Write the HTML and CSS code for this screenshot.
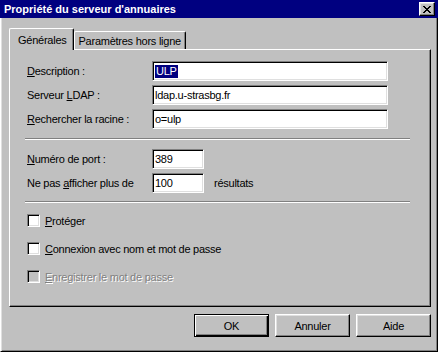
FILE: index.html
```html
<!DOCTYPE html>
<html lang="fr">
  <head>
    <meta charset="UTF-8" />
    <title>Propriété du serveur d'annuaires</title>
    <link rel="stylesheet" href="styles.css">
  </head>
  <body>
    <div class="window">
      <div class="titlebar">
        <span>Propriété du serveur d'annuaires</span>
        <div class="close">
          <svg width="8" height="7" viewBox="0 0 8 7">
            <path d="M0 0h2v1h-2zM6 0h2v1h-2zM1 1h2v1h-2zM5 1h2v1h-2zM2 2h4v1h-4zM3 3h2v1h-2zM2 4h4v1h-4zM1 5h2v1h-2zM5 5h2v1h-2zM0 6h2v1h-2zM6 6h2v1h-2z" fill="#000"/>
          </svg>
        </div>
      </div>

      <div class="client">
        <div class="tabs">
          <div class="tab active">Générales</div>
          <div class="tab">Paramètres hors ligne</div>
        </div>

        <div class="panel">
          <!-- serveur -->
          <div class="form">
            <label><u>D</u>escription :</label>
            <div class="field"><span class="selected">ULP</span></div>
            <label>Serveur <u>L</u>DAP :</label>
            <div class="field">ldap.u-strasbg.fr</div>
            <label><u>R</u>echercher la racine :</label>
            <div class="field">o=ulp</div>
          </div>

          <div class="sep"></div>

          <!-- port / résultats -->
          <div class="form small">
            <label><u>N</u>uméro de port :</label>
            <div class="field">389</div>
            <span></span>
            <label>Ne pas <u>a</u>fficher plus de</label>
            <div class="field">100</div>
            <span class="unit">résultats</span>
          </div>

          <div class="sep"></div>

          <div class="checks">
            <div class="check"><span class="box"></span><span><u>P</u>rotéger</span></div>
            <div class="check"><span class="box"></span><span><u>C</u>onnexion avec nom et mot de passe</span></div>
            <div class="check disabled"><span class="box"></span><span><u>E</u>nregistrer le mot de passe</span></div>
          </div>
        </div>

        <div class="buttons">
          <div class="btn default">OK</div>
          <div class="btn">Annuler</div>
          <div class="btn">Aide</div>
        </div>
      </div>
    </div>
  </body>
</html>
```

FILE: styles.css
```css
* {
  margin: 0;
  padding: 0;
  box-sizing: border-box;
}

body {
  width: 438px;
  height: 352px;
  overflow: hidden;
  background: #c0c0c0;
  font-family: "Liberation Sans", Arial, sans-serif;
  font-size: 11px;
  letter-spacing: -0.25px;
  color: #000;
}

.window {
  width: 438px;
  height: 352px;
  display: flex;
  flex-direction: column;
}

.titlebar {
  height: 18px;
  background: #000080;
  color: #fff;
  font-weight: bold;
  letter-spacing: 0;
  display: flex;
  align-items: center;
  justify-content: space-between;
  padding: 0 3px 0 4px;
}

.close {
  width: 16px;
  height: 14px;
  background: #c0c0c0;
  border: 1px solid;
  border-color: #fff #000 #000 #fff;
  box-shadow: inset -1px -1px #808080, inset 1px 1px #dfdfdf;
  display: flex;
  align-items: center;
  justify-content: center;
}

.client {
  flex: 1;
  display: flex;
  flex-direction: column;
  border-left: 1px solid #fff;
  border-right: 1px solid #000;
  border-bottom: 1px solid #000;
  box-shadow: inset 1px 0 #dfdfdf, inset -1px -1px #808080;
  padding: 10px 6px 0 8px;
}

.tabs {
  height: 21px;
  display: flex;
  align-items: flex-end;
}

.tab {
  height: 18px;
  display: flex;
  align-items: center;
  padding: 0 4px 0 4px;
  border: 1px solid;
  border-bottom: 0;
  border-color: #fff #000 #000 #fff;
  box-shadow: inset -1px 0 #808080;
  border-radius: 2px 2px 0 0;
}

.tab.active {
  height: 22px;
  margin-bottom: -1px;
  padding: 0 6px 0 8px;
  background: #c0c0c0;
  position: relative;
  z-index: 1;
}

.panel {
  height: 258px;
  border: 1px solid;
  border-color: #fff #000 #000 #fff;
  box-shadow: inset -1px -1px #808080;
  padding: 11px 20px 0 17px;
}

.form {
  display: grid;
  grid-template-columns: 125px 236px;
  row-gap: 4px;
  align-items: center;
}

.form.small {
  grid-template-columns: 125px 52px auto;
}

.field {
  height: 20px;
  background: #fff;
  border: 1px solid;
  border-color: #808080 #fff #fff #808080;
  box-shadow: inset 1px 1px #000, inset -1px -1px #dfdfdf;
  padding: 0 2px;
  display: flex;
  align-items: center;
  white-space: nowrap;
}

.selected {
  background: #000080;
  color: #fff;
  padding: 0 1px;
  line-height: 13px;
}

.unit {
  margin-left: 10px;
}

.sep {
  height: 2px;
  margin: 9px 0 9px -2px;
  border-top: 1px solid #808080;
  border-bottom: 1px solid #fff;
}

.form.small + .sep {
  margin: 8px 0 11px -2px;
}

.checks {
  display: flex;
  flex-direction: column;
  gap: 15px;
}

.check {
  height: 13px;
  display: flex;
  align-items: center;
  gap: 5px;
}

.box {
  width: 13px;
  height: 13px;
  background: #fff;
  border: 1px solid;
  border-color: #808080 #fff #fff #808080;
  box-shadow: inset 1px 1px #000, inset -1px -1px #dfdfdf;
}

.check.disabled {
  color: #808080;
  text-shadow: 1px 1px #fff;
}

.check.disabled .box {
  background: #c0c0c0;
}

.buttons {
  display: flex;
  justify-content: flex-end;
  gap: 6px;
  margin-top: 7px;
}

.btn {
  width: 75px;
  height: 23px;
  display: flex;
  align-items: center;
  justify-content: center;
  border: 1px solid;
  border-color: #fff #000 #000 #fff;
  box-shadow: inset -1px -1px #808080, inset 1px 1px #dfdfdf;
}

.btn.default {
  border-color: #000;
  box-shadow: inset 1px 1px #fff, inset -1px -1px #000, inset -2px -2px #808080;
}
```
